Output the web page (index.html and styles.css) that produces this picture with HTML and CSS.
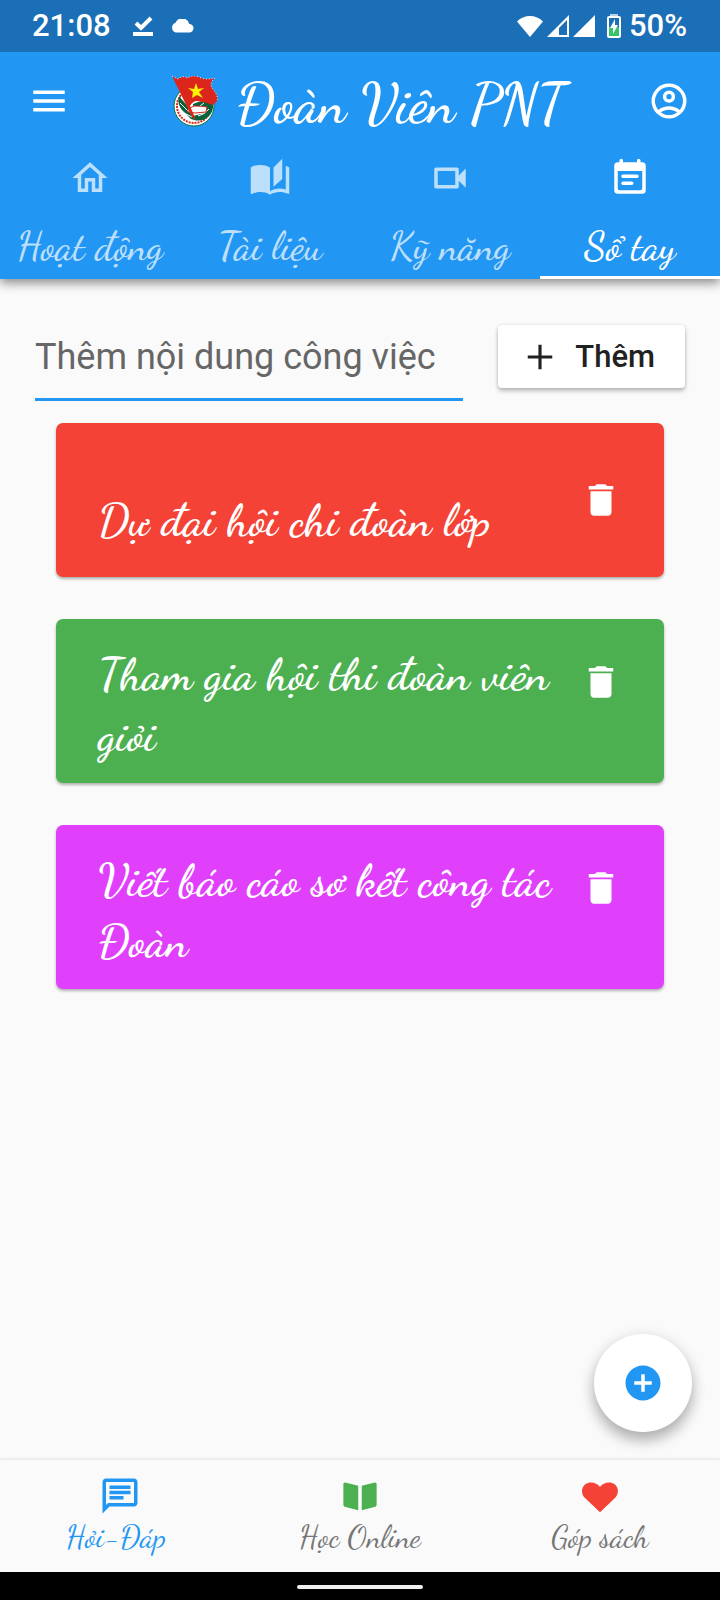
FILE: index.html
```html
<!DOCTYPE html>
<html lang="vi">
<head>
<meta charset="utf-8">
<meta name="viewport" content="width=device-width, initial-scale=1">
<title>Đoàn Viên PNT</title>
<link rel="stylesheet" href="styles.css">
</head>
<body>
<div class="app">
  <div class="status">
    <span class="clock">21:08</span>
    <svg class="status-done" width="20" height="22" viewBox="0 0 20 22"><path d="M3 8l5 5L18 3" fill="none" stroke="#fff" stroke-width="4"/><path d="M0 17h20v4H0z" fill="#fff"/></svg>
    <svg class="status-cloud" width="24" height="14" viewBox="0 0 24 14"><path d="M19.300 5.100A7.300 7.300 0 0 0 5.500 3.700 5.200 5.200 0 0 0 5.600 13.500H19.300A4.200 4.200 0 0 0 19.300 5.100z" fill="#fff"/></svg>
    <span class="status-right">
      <svg width="26" height="22" viewBox="0 0 26 22"><path d="M13 22L0 6.500Q5.500 1 13 1t13 5.500z" fill="#fff"/></svg>
      <svg width="22" height="22" viewBox="0 0 22 22"><path d="M22 0v22H0z" fill="#fff"/><path d="M20 5v15h-8v-7z" fill="#1a6fb6"/></svg>
      <svg class="signal-full" width="22" height="22" viewBox="0 0 22 22"><path d="M22 0v22H0z" fill="#fff"/></svg>
      <svg class="battery" width="14" height="24" viewBox="0 0 14 24"><path d="M3 0h8v2H3z" fill="#b9d3e8"/><rect x="1" y="3" width="12" height="20" rx="1" fill="#1a6fb6" stroke="#fff" stroke-width="2"/><path d="M2 13h10v9H2z" fill="#35c46a"/><path d="M8 5l-5 9h3v6l5-9H8z" fill="#fff"/></svg>
      <span>50%</span>
    </span>
  </div>

  <header class="header">
    <div class="bar">
      <button class="icon-button" type="button" aria-label="Menu"><svg class="icon" viewBox="0 0 24 24"><path d="M3 18h18v-2H3v2zm0-5h18v-2H3v2zm0-7v2h18V6H3z"/></svg></button>
      <div class="brand">
        <svg class="emblem" width="46" height="51" viewBox="0 0 46 51">
          <circle cx="22" cy="30" r="20" fill="#fff" stroke="#08733f" stroke-width="1"/>
          <circle cx="22" cy="30" r="17" fill="none" stroke="#d8261c" stroke-width="2" stroke-dasharray="2 1"/>
          <circle cx="22" cy="29" r="15" fill="#fff"/>
          <path d="M7 20q-2 8 3 14l9 9 3 1-3-10-8-10zM21 28q9-5 20-1 1 9-5 14-6 5-14 3l-1-4 12-3 2-5-14-1z" fill="#08633d"/>
          <path d="M9 22l8 9m-9-4l9 9m-5 1l8 4m6-1q6-1 11-7m-9-3l4-3" fill="none" stroke="#fff" stroke-width="1"/>
          <path d="M16 33l6-3q8 0 13 1l-1 5-11 1-7-1z" fill="#fff" stroke="#d8261c" stroke-width="1"/>
          <path d="M0 0l6 3q5-4 9-1 7-4 14 0 6 2 14 0-6 5-3 10 7 8 5 13-2 3-5 4-5-3-11-3-7-3-11 4l6 14-4-3z" fill="#dc251b"/>
          <path d="M0 0l6 3q5-4 9-1 7-4 14 0 6 2 14 0-6 5-3 10 7 8 5 13" fill="none" stroke="#fff" stroke-width="1" stroke-dasharray="1 2"/>
          <path d="M24 7l2 6 6-1-5 4 4 6-6-3-5 3 1-6-5-4 6 1z" fill="#fff200"/>
        </svg>
        <h1 class="title">Đoàn Viên PNT</h1>
      </div>
      <button class="icon-button" type="button" aria-label="Tài khoản"><svg class="icon" viewBox="0 0 24 24"><path fill-rule="evenodd" d="M12 2a10 10 0 1 0 0 20 10 10 0 0 0 0-20zM7.350 18.500C8.660 17.560 10.260 17 12 17s3.340.56 4.650 1.500C15.340 19.440 13.740 20 12 20s-3.340-.56-4.650-1.500zm10.790-1.380a9.950 9.950 0 0 0-12.280 0A8 8 0 1 1 20 12c0 1.950-.7 3.730-1.860 5.120zM12 6a3.500 3.500 0 1 0 0 7 3.500 3.500 0 0 0 0-7zm0 5a1.500 1.500 0 1 1 0-3 1.500 1.500 0 0 1 0 3z"/></svg></button>
    </div>
    <nav class="tabs">
      <a class="tab" href="#hoat-dong"><svg class="icon" viewBox="0 0 24 24"><path d="M12 5.690l5 4.500V18h-2v-6H9v6H7v-7.810l5-4.500M12 3L2 12h3v8h6v-6h2v6h6v-8h3L12 3z"/></svg><span>Hoạt động</span></a>
      <a class="tab" href="#tai-lieu"><svg class="icon" viewBox="0 0 24 24"><path d="M19 1l-5 5v11l5-4.500V1zM1 6v14.650c0 .25.25.5.5.5.1 0 .15-.05.25-.05C3.100 20.450 5.050 20 6.500 20c1.950 0 4.050.4 5.500 1.500V6c-1.450-1.100-3.550-1.500-5.500-1.500S2.450 4.900 1 6zm22 13.500V6c-.6-.45-1.250-.75-2-1v13.500c-1.100-.35-2.300-.5-3.500-.5-1.700 0-4.150.65-5.500 1.500v2c1.350-.85 3.800-1.500 5.500-1.500 1.650 0 3.350.3 4.750 1.050.1.050.15.050.25.050.25 0 .5-.25.5-.5v-1.100z"/></svg><span>Tài liệu</span></a>
      <a class="tab" href="#ky-nang"><svg class="icon" viewBox="0 0 24 24"><path d="M15 8v8H5V8h10m1-2H4c-.55 0-1 .45-1 1v10c0 .55.45 1 1 1h12c.55 0 1-.45 1-1v-3.500l4 4v-11l-4 4V7c0-.55-.45-1-1-1z"/></svg><span>Kỹ năng</span></a>
      <a class="tab tab-active" href="#so-tay" aria-current="page"><svg class="icon" viewBox="0 0 24 24"><path fill-rule="evenodd" d="M5 3h1V2a1 1 0 0 1 2 0v1h8V2a1 1 0 0 1 2 0v1h1a2 2 0 0 1 2 2v14a2 2 0 0 1-2 2H5a2 2 0 0 1-2-2V5a2 2 0 0 1 2-2zm0 5v10a1 1 0 0 0 1 1h12a1 1 0 0 0 1-1V8z"/><path d="M8 11h8M8 15h5" fill="none" stroke="currentColor" stroke-width="2" stroke-linecap="round"/></svg><span>Sổ tay</span></a>
    </nav>
  </header>

  <main class="main">
    <form class="add">
      <input class="add-input" type="text" placeholder="Thêm nội dung công việc" aria-label="Thêm nội dung công việc">
      <button class="add-button" type="button"><svg class="icon" viewBox="0 0 24 24"><path d="M19 12.900h-6.100V19h-1.800v-6.100H5v-1.800h6.100V5h1.800v6.100H19z"/></svg><span>Thêm</span></button>
    </form>
    <ul class="list">
      <li class="card card-red"><p class="card-text">Dự đại hội chi đoàn lớp</p><button class="icon-button" type="button" aria-label="Xóa"><svg class="icon" viewBox="0 0 24 24"><path d="M6 19c0 1.100.9 2 2 2h8c1.100 0 2-.9 2-2V7H6v12zM19 4h-3.500l-1-1h-5l-1 1H5v2h14V4z"/></svg></button></li>
      <li class="card card-green"><p class="card-text">Tham gia hội thi đoàn viên giỏi</p><button class="icon-button" type="button" aria-label="Xóa"><svg class="icon" viewBox="0 0 24 24"><path d="M6 19c0 1.100.9 2 2 2h8c1.100 0 2-.9 2-2V7H6v12zM19 4h-3.500l-1-1h-5l-1 1H5v2h14V4z"/></svg></button></li>
      <li class="card card-purple"><p class="card-text">Viết báo cáo sơ kết công tác Đoàn</p><button class="icon-button" type="button" aria-label="Xóa"><svg class="icon" viewBox="0 0 24 24"><path d="M6 19c0 1.100.9 2 2 2h8c1.100 0 2-.9 2-2V7H6v12zM19 4h-3.500l-1-1h-5l-1 1H5v2h14V4z"/></svg></button></li>
    </ul>
    <button class="fab" type="button" aria-label="Thêm mới"><svg class="icon" viewBox="0 0 24 24"><path d="M12 2C6.480 2 2 6.480 2 12s4.480 10 10 10 10-4.480 10-10S17.520 2 12 2zm5 11h-4v4h-2v-4H7v-2h4V7h2v4h4v2z"/></svg></button>
  </main>

  <nav class="bottom">
    <a class="bottom-item bottom-active" href="#hoi-dap"><svg class="icon" viewBox="0 0 24 24"><path d="M4 4h16v12H5.170L4 17.170V4m0-2c-1.100 0-2 .9-2 2v18l4-4h14c1.100 0 2-.9 2-2V4c0-1.100-.9-2-2-2H4zm2 10h8v2H6v-2zm0-3h12v2H6V9zm0-3h12v2H6V6z"/></svg><span>Hỏi-Đáp&nbsp;</span></a>
    <a class="bottom-item" href="#hoc-online"><svg class="icon icon-green" viewBox="0 0 24 24"><path d="M11 6.100v14l-7.700-2Q2.500 18 2.500 17V5.200q0-1 1-.9zM13 6.100v14l7.700-2q.8-.1.800-1.100V5.200q0-1-1-.9z"/></svg><span>Học Online</span></a>
    <a class="bottom-item" href="#gop-sach"><svg class="icon icon-red" viewBox="0 0 24 24"><path d="M12 21.300L3.300 13C.3 9.900 1.800 4.300 6.900 4.300c2 0 3.900.9 5.100 2.600 1.200-1.700 3.100-2.600 5.100-2.600 5.100 0 6.600 5.600 3.600 8.700z"/></svg><span>Góp sách</span></a>
  </nav>
  <div class="gesture"><span class="gesture-pill"></span></div>
</div>
</body>
</html>
```
FILE: styles.css
```css
* { box-sizing: border-box; }
body { margin: 0; background: #fafafa; font-family: Roboto, "Noto Sans", sans-serif; }
button { border: 0; padding: 0; background: none; color: inherit; font: inherit; }
a { color: inherit; text-decoration: none; }
svg { display: block; flex: none; }

.app { display: flex; flex-direction: column; min-height: 100vh; }
.icon { width: 42px; height: 42px; fill: currentColor; }
.icon-button { flex: none; }

.status { position: relative; z-index: 1; display: flex; align-items: center; height: 52px; padding: 0 33px 0 32px; background: #1a6fb6; color: #fff; font-size: 31px; line-height: 52px; font-weight: 500; }
.status-done { margin-left: 22px; }
.status-cloud { margin-left: 17px; }
.status-right { display: flex; align-items: center; gap: 4px; margin-left: auto; }
.signal-full { margin-right: 8px; }
.battery { margin-right: 4px; }

.header { position: relative; background: #2196f3; color: #fff; box-shadow: 0 4px 10px rgba(0, 0, 0, 0.45); }
.bar { display: flex; align-items: center; height: 98px; padding: 0 30px 0 28px; }
.brand { display: flex; flex: 1; align-items: center; justify-content: center; gap: 19px; padding-left: 20px; }
.title, .tab, .card-text, .bottom-item { font-family: "Dancing Script", "Liberation Serif", cursive; }
.title { margin: 0; padding-top: 6px; font-size: 56px; line-height: 64px; font-weight: 600; white-space: nowrap; }

.tabs { display: grid; grid-template-columns: repeat(4, 1fr); }
.tab { display: flex; flex-direction: column; align-items: center; gap: 23px; padding: 7px 0 6px; border-bottom: 3px solid transparent; color: #bcdffb; font-size: 40px; line-height: 48px; font-weight: 500; white-space: nowrap; }
.tab-active { border-bottom-color: #fff; color: #fff; }

.main { position: relative; flex: 1; padding: 46px 35px 40px; }
.add { display: flex; align-items: flex-start; gap: 35px; }
.add-input { flex: 1; min-width: 0; height: 76px; padding: 0 0 10px; border: 0; border-bottom: 3px solid #2196f3; border-radius: 0; outline: 0; background: transparent; color: #212121; font: 36px Roboto, "Noto Sans", sans-serif; }
.add-input::placeholder { color: #666; opacity: 1; }
.add-button { display: flex; align-items: center; gap: 14px; height: 63px; padding: 0 30px 0 21px; border-radius: 4px; background: #fff; color: #212121; font-size: 31px; font-weight: 500; box-shadow: 0 3px 4px rgba(0, 0, 0, 0.25), 0 0 3px rgba(0, 0, 0, 0.12); }

.list { display: flex; flex-direction: column; gap: 42px; margin: 22px 21px 0; padding: 0; list-style: none; }
.card { display: flex; align-items: flex-start; justify-content: space-between; gap: 8px; padding: 25px 42px 17px; border-radius: 7px; color: #fff; box-shadow: 0 2px 3px rgba(0, 0, 0, 0.3); }
.card .icon-button { margin-top: 17px; }
.card-text { margin: 0; font-size: 46px; line-height: 61px; font-weight: 600; }
.card-red .card-text { padding-top: 42px; padding-bottom: 9px; }
.card-red .icon-button { margin-top: 31px; }
.card-red { background: #f44336; }
.card-green { background: #4caf50; }
.card-purple { background: #e040fb; }

.fab { position: absolute; right: 28px; bottom: 28px; display: flex; align-items: center; justify-content: center; width: 98px; height: 98px; border-radius: 50%; background: #fff; color: #2196f3; box-shadow: 0 9px 14px rgba(0, 0, 0, 0.25), 0 2px 16px rgba(0, 0, 0, 0.1); }

.bottom { display: grid; grid-template-columns: repeat(3, 1fr); height: 112px; padding-top: 15px; background: #fafafa; box-shadow: 0 -1px 3px rgba(0, 0, 0, 0.1); }
.bottom-item { display: flex; flex-direction: column; align-items: center; gap: 2px; color: #757575; font-size: 31px; line-height: 36px; }
.bottom-active { color: #2196f3; }
.icon-green { color: #4caf50; }
.icon-red { color: #f44336; }

.gesture { display: flex; align-items: center; justify-content: center; height: 28px; padding-top: 2px; background: #000; }
.gesture-pill { width: 126px; height: 4px; border-radius: 2px; background: #eee; }
```
